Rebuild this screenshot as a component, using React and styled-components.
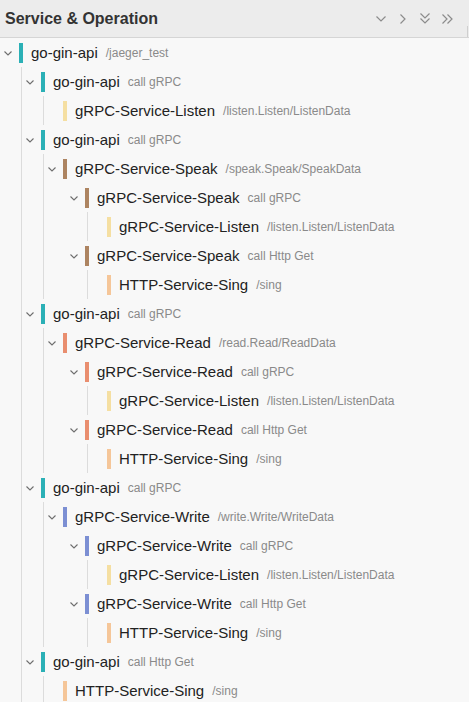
import styled, { createGlobalStyle } from 'styled-components';

const COLORS = {
  api: '#2bb0b6',
  listen: '#f5dfa2',
  speak: '#ad8461',
  read: '#e98e6f',
  write: '#7c8fd3',
  sing: '#f5c699',
};

const listen = { name: 'gRPC-Service-Listen', meta: '/listen.Listen/ListenData', color: COLORS.listen };
const sing = { name: 'HTTP-Service-Sing', meta: '/sing', color: COLORS.sing };

const service = (name, meta, color) => ({
  name,
  meta,
  color,
  children: [
    { name, meta: 'call gRPC', color, children: [listen] },
    { name, meta: 'call Http Get', color, children: [sing] },
  ],
});

const tree = {
  name: 'go-gin-api',
  meta: '/jaeger_test',
  color: COLORS.api,
  children: [
    { name: 'go-gin-api', meta: 'call gRPC', color: COLORS.api, children: [listen] },
    {
      name: 'go-gin-api',
      meta: 'call gRPC',
      color: COLORS.api,
      children: [service('gRPC-Service-Speak', '/speak.Speak/SpeakData', COLORS.speak)],
    },
    {
      name: 'go-gin-api',
      meta: 'call gRPC',
      color: COLORS.api,
      children: [service('gRPC-Service-Read', '/read.Read/ReadData', COLORS.read)],
    },
    {
      name: 'go-gin-api',
      meta: 'call gRPC',
      color: COLORS.api,
      children: [service('gRPC-Service-Write', '/write.Write/WriteData', COLORS.write)],
    },
    { name: 'go-gin-api', meta: 'call Http Get', color: COLORS.api, children: [sing] },
  ],
};

const ChevronDown = () => (
  <svg width="10" height="6" viewBox="0 0 10 6" fill="none" stroke="#8c8c8c" strokeWidth="1.2">
    <path d="M0.5 0.5 L5 5 L9.5 0.5" />
  </svg>
);

const ChevronRight = () => (
  <svg width="6" height="10" viewBox="0 0 6 10" fill="none" stroke="#8c8c8c" strokeWidth="1.2">
    <path d="M0.5 0.5 L5 5 L0.5 9.5" />
  </svg>
);

const DoubleDown = () => (
  <svg width="10" height="11" viewBox="0 0 10 11" fill="none" stroke="#8c8c8c" strokeWidth="1.2">
    <path d="M0.5 0.5 L5 5 L9.5 0.5" />
    <path d="M0.5 5.5 L5 10 L9.5 5.5" />
  </svg>
);

const DoubleRight = () => (
  <svg width="11" height="10" viewBox="0 0 11 10" fill="none" stroke="#8c8c8c" strokeWidth="1.2">
    <path d="M0.5 0.5 L5 5 L0.5 9.5" />
    <path d="M5.5 0.5 L10 5 L5.5 9.5" />
  </svg>
);

const RowChevron = () => (
  <svg width="8" height="5" viewBox="0 0 8 5" fill="none" stroke="#6e6e6e" strokeWidth="1.1">
    <path d="M0.5 0.5 L4 4 L7.5 0.5" />
  </svg>
);

const TreeNode = ({ node, level }) => {
  const hasChildren = node.children && node.children.length > 0;
  return (
    <>
      <Row $level={level}>
        <Toggle>{hasChildren && <RowChevron />}</Toggle>
        <Bar $color={node.color} />
        <Name>{node.name}</Name>
        <Meta>{node.meta}</Meta>
      </Row>
      {hasChildren && (
        <Children $level={level} $guide={level !== 2}>
          {node.children.map((child, i) => (
            <TreeNode key={i} node={child} level={level + 1} />
          ))}
        </Children>
      )}
    </>
  );
};

const App = () => {
  return (
    <>
      <GlobalStyle />
      <Panel>
        <Header>
          <Title>Service &amp; Operation</Title>
          <Tools>
            <ToolButton><ChevronDown /></ToolButton>
            <ToolButton><ChevronRight /></ToolButton>
            <ToolButton><DoubleDown /></ToolButton>
            <ToolButton><DoubleRight /></ToolButton>
          </Tools>
          <Grip />
        </Header>
        <Tree>
          <TreeNode node={tree} level={0} />
        </Tree>
      </Panel>
    </>
  );
};

const GlobalStyle = createGlobalStyle`
  html, body {
    margin: 0;
    padding: 0;
    overflow: hidden;
    background: #f8f8f8;
  }
  body {
    font-family: "Liberation Sans", Arial, sans-serif;
  }
`;

const Panel = styled.div`
  width: 469px;
  height: 702px;
  background: #f8f8f8;
  overflow: hidden;
`;

const Header = styled.div`
  display: flex;
  align-items: center;
  height: 37px;
  padding-left: 5px;
  background: #ececec;
  border-bottom: 1px solid #d5d5d5;
`;

const Title = styled.div`
  flex: 1;
  font-size: 16px;
  font-weight: bold;
  color: #333;
  padding-top: 1px;
`;

const Tools = styled.div`
  display: flex;
  align-items: center;
  margin-right: 9px;
`;

const ToolButton = styled.span`
  display: flex;
  align-items: center;
  justify-content: center;
  width: 22px;
  height: 22px;
`;

const Grip = styled.span`
  align-self: flex-end;
  width: 1px;
  height: 11px;
  margin-right: 1px;
  background: #cfcfcf;
`;

const Tree = styled.div`
  display: flex;
  flex-direction: column;
`;

const Row = styled.div`
  display: flex;
  align-items: center;
  height: 29px;
  padding-left: ${(p) => 4 + p.$level * 22}px;
  white-space: nowrap;
`;

const Toggle = styled.span`
  display: flex;
  align-items: center;
  width: 15px;
  height: 29px;
  padding-top: 1px;
`;

const Bar = styled.span`
  width: 4px;
  height: 20px;
  margin-right: 8px;
  background: ${(p) => p.$color};
`;

const Name = styled.span`
  font-size: 15px;
  color: #222;
`;

const Meta = styled.span`
  margin-left: 8px;
  font-size: 12px;
  color: #8a8a8a;
  padding-top: 1px;
`;

const Children = styled.div`
  display: flex;
  flex-direction: column;
  background: ${(p) =>
    p.$guide
      ? `linear-gradient(#dcdcdc, #dcdcdc) no-repeat ${21 + p.$level * 22}px 0 / 1px 100%`
      : 'none'};
`;

export default App;
